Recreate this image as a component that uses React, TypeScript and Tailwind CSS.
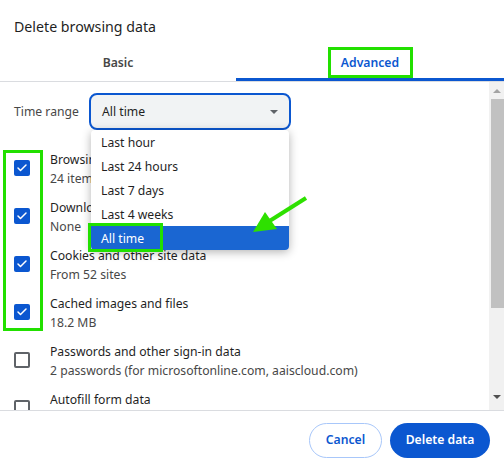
import { Check } from "lucide-react";

const rows = [
  { title: "Browsing history", sub: "24 items", checked: true },
  { title: "Download history", sub: "None", checked: true },
  { title: "Cookies and other site data", sub: "From 52 sites", checked: true },
  { title: "Cached images and files", sub: "18.2 MB", checked: true },
  { title: "Passwords and other sign-in data", sub: "2 passwords (for microsoftonline.com, aaiscloud.com)", checked: false },
  { title: "Autofill form data", sub: "", checked: false },
];

const options = ["Last hour", "Last 24 hours", "Last 7 days", "Last 4 weeks", "All time"];

function Checkbox({ checked }: { checked: boolean }) {
  if (checked) {
    return (
      <span className="flex h-4 w-4 shrink-0 items-center justify-center rounded-[2px] bg-[#0b57d0]">
        <Check size={12} strokeWidth={3} className="text-white" />
      </span>
    );
  }
  return <span className="h-4 w-4 shrink-0 rounded-[2px] border-2 border-[#5f6368]" />;
}

export default function App() {
  return (
    <div
      className="relative flex h-[475px] w-[504px] flex-col overflow-hidden bg-white text-[12.2px] text-[#1f1f1f]"
      style={{ fontFamily: '"Noto Sans", "Open Sans", sans-serif' }}
    >
      <h1 className="px-[14px] pt-[16px] text-[14.2px] leading-[22px]">Delete browsing data</h1>

      {/* tabs */}
      <div className="mt-[7px] flex border-b border-[#dadce0]">
        <div className="flex h-[36px] w-[236px] items-center justify-center text-[12.2px] font-semibold text-[#474747]">
          Basic
        </div>
        <div className="flex h-[36px] flex-1 items-center justify-center border-b-[3px] border-[#0b57d0] pt-[3px] text-[12.2px] font-semibold text-[#0b57d0]">
          Advanced
        </div>
      </div>

      {/* scroll body */}
      <div className="flex h-[328px] overflow-hidden">
        <div className="flex-1">
          <div className="flex items-center pl-[14px] pt-[11px]">
            <span className="w-[75px] pt-[1px] text-[#474747]">Time range</span>
            <div className="flex h-[37px] w-[202px] items-center justify-between rounded-[8px] border-2 border-[#0b57d0] bg-[#f1f3f4] pl-[11px] pr-[11px] pt-[1px] text-[#1f1f1f]">
              <span>All time</span>
              <span className="h-0 w-0 border-x-[4px] border-t-[4px] border-x-transparent border-t-[#5f6368]" />
            </div>
          </div>
          <div className="pt-[14px]">
            {rows.map((r) => (
              <div key={r.title} className="flex h-[48px] items-center gap-[20px] pl-[14px]">
                <Checkbox checked={r.checked} />
                <div className="pt-[1px] leading-[19px]">
                  <div>{r.title}</div>
                  <div className="text-[#474747]">{r.sub || "\u00a0"}</div>
                </div>
              </div>
            ))}
          </div>
        </div>
        <div className="flex w-[15px] flex-col items-center bg-[#f1f1f1]">
          <span className="mt-[7px] h-0 w-0 border-x-[4px] border-b-[4px] border-x-transparent border-b-[#a3a3a3]" />
          <div className="mt-[6px] h-[209px] w-[13px] self-end bg-[#c1c1c1]" />
          <span className="mt-auto mb-[11px] h-0 w-0 border-x-[4px] border-t-[4px] border-x-transparent border-t-[#505050]" />
        </div>
      </div>

      {/* footer */}
      <div className="flex flex-1 items-center justify-end gap-[8px] border-t border-[#dadce0] pr-[14px] pb-[6px]">
        <button className="h-[35px] w-[73px] rounded-full border border-[#a8c7fa] text-[12.2px] font-semibold text-[#0b57d0]">
          Cancel
        </button>
        <button className="h-[35px] w-[100px] rounded-full bg-[#0b57d0] text-[12.2px] font-semibold text-white">
          Delete data
        </button>
      </div>

      {/* dropdown menu */}
      <div className="absolute left-[91px] top-[130px] w-[198px] overflow-hidden rounded-[4px] bg-white shadow-[0_2px_10px_rgba(0,0,0,0.3)]">
        {options.map((o, i) => (
          <div
            key={o}
            className={
              i === options.length - 1
                ? "flex h-[24px] items-center bg-[#1a66d2] pl-[10px] pt-[2px] text-white"
                : "flex h-[24px] items-center pl-[10px] pt-[2px] text-[#1f1f1f]"
            }
          >
            {o}
          </div>
        ))}
      </div>

      {/* green annotations */}
      <div className="pointer-events-none absolute left-[328px] top-[47px] h-[31px] w-[85px] border-[3px] border-[#22e000]" />
      <div className="pointer-events-none absolute left-[3px] top-[150px] h-[181px] w-[40px] border-[3px] border-[#22e000]" />
      <div className="pointer-events-none absolute left-[88px] top-[223px] h-[29px] w-[75px] border-[3px] border-[#22e000]" />
      <svg className="pointer-events-none absolute left-0 top-0" width="504" height="475">
        <line x1="306" y1="198" x2="268" y2="222" stroke="#2ee000" strokeWidth="4" />
        <polygon points="253,232 265,212 277,229" fill="#2ee000" />
      </svg>
    </div>
  );
}
